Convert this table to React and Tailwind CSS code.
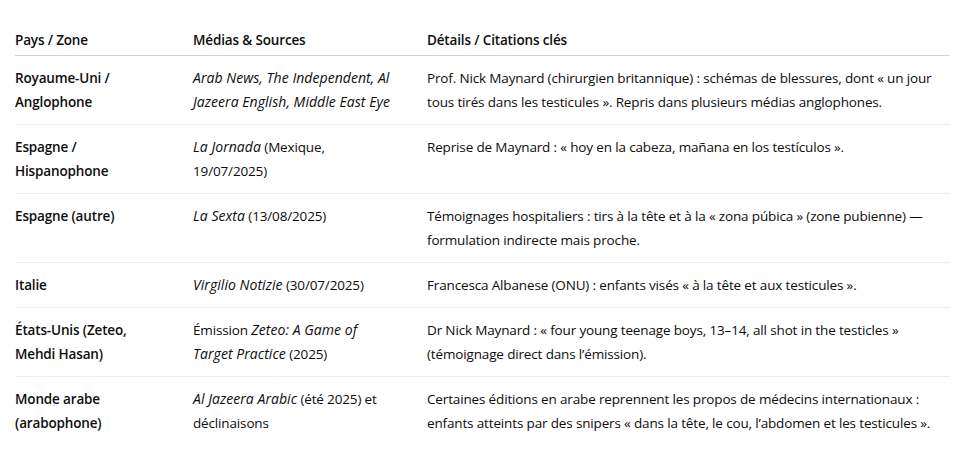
import React from 'react'

// rows of the comparison table; media cell mixes italic titles and plain text
const rows = [
  {
    zone: ['Royaume-Uni /', 'Anglophone'],
    media: [[['i', 'Arab News, The Independent, Al']], [['i', 'Jazeera English, Middle East Eye']]],
    details: [
      'Prof. Nick Maynard (chirurgien britannique) : schémas de blessures, dont « un jour',
      'tous tirés dans les testicules ». Repris dans plusieurs médias anglophones.',
    ],
  },
  {
    zone: ['Espagne /', 'Hispanophone'],
    media: [[['i', 'La Jornada'], ['n', ' (Mexique,']], [['n', '19/07/2025)']]],
    details: ['Reprise de Maynard : « hoy en la cabeza, mañana en los testículos ».'],
  },
  {
    zone: ['Espagne (autre)'],
    media: [[['i', 'La Sexta'], ['n', ' (13/08/2025)']]],
    details: [
      'Témoignages hospitaliers : tirs à la tête et à la « zona púbica » (zone pubienne) —',
      'formulation indirecte mais proche.',
    ],
  },
  {
    zone: ['Italie'],
    media: [[['i', 'Virgilio Notizie'], ['n', ' (30/07/2025)']]],
    details: ['Francesca Albanese (ONU) : enfants visés « à la tête et aux testicules ».'],
  },
  {
    zone: ['États-Unis (Zeteo,', 'Mehdi Hasan)'],
    media: [[['n', 'Émission '], ['i', 'Zeteo: A Game of']], [['i', 'Target Practice'], ['n', ' (2025)']]],
    details: [
      'Dr Nick Maynard : « four young teenage boys, 13–14, all shot in the testicles »',
      '(témoignage direct dans l’émission).',
    ],
  },
  {
    zone: ['Monde arabe', '(arabophone)'],
    media: [[['i', 'Al Jazeera Arabic'], ['n', ' (été 2025) et']], [['n', 'déclinaisons']]],
    details: [
      'Certaines éditions en arabe reprennent les propos de médecins internationaux :',
      'enfants atteints par des snipers « dans la tête, le cou, l’abdomen et les testicules ».',
    ],
  },
]

function Lines({lines}) {
  return lines.map((l, i) => <div key={i} className="whitespace-nowrap">{l}</div>)
}

export default function App() {
  return (
    <div
      className="w-[963px] h-[461px] bg-white text-[#0d0d0d] text-[13.5px] leading-[24px] tracking-[-0.15px] pt-[28px] pl-[15px] overflow-hidden"
      style={{fontFamily: '"Open Sans", "Noto Sans", sans-serif'}}
    >
      <div className="w-[935px]">
        <div className="grid grid-cols-[178px_234px_1fr] font-semibold pb-[3px] border-b border-[#d4d4d4]">
          <div>Pays / Zone</div>
          <div>Médias &amp; Sources</div>
          <div>Détails / Citations clés</div>
        </div>
        {rows.map((r, i) => (
          <div
            key={i}
            className={
              'grid grid-cols-[178px_234px_1fr] py-[10px] ' +
              (i < rows.length - 1 ? 'border-b border-[#ededed]' : '')
            }
          >
            <div className="font-semibold">
              <Lines lines={r.zone} />
            </div>
            <div>
              {r.media.map((line, j) => (
                <div key={j} className="whitespace-nowrap">
                  {line.map(([k, t], n) =>
                    k === 'i' ? (
                      <em key={n} className="text-[14px] tracking-[0.05px]">{t}</em>
                    ) : (
                      <span key={n}>{t}</span>
                    )
                  )}
                </div>
              ))}
            </div>
            <div>
              <Lines lines={r.details} />
            </div>
          </div>
        ))}
      </div>
    </div>
  )
}
